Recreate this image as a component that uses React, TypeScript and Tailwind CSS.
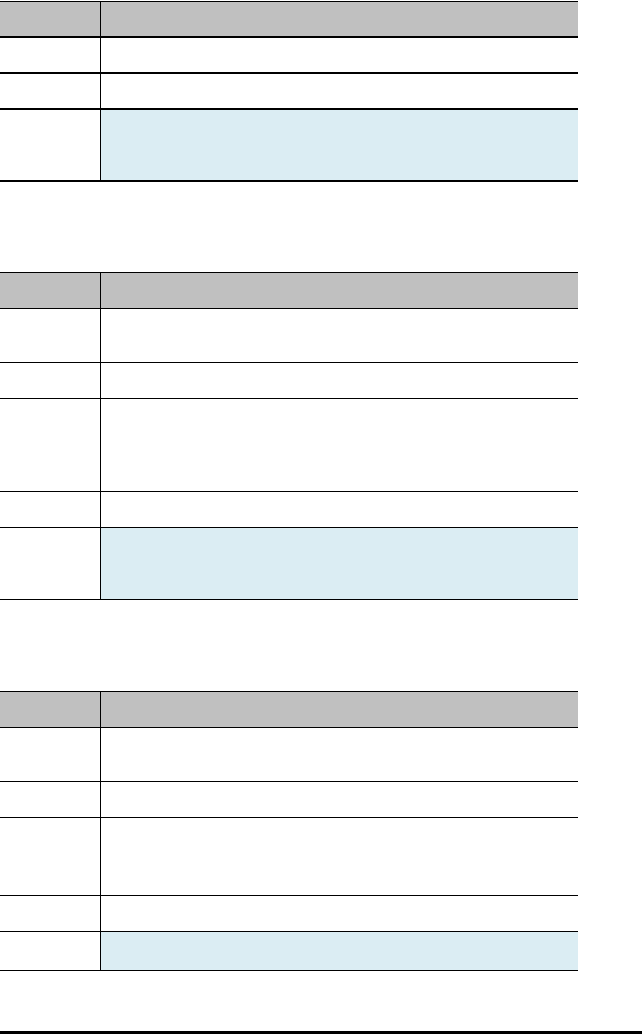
type Row = { h: string; blue?: boolean };

// row heights include the bottom rule
const tableOne: Row[] = [
  { h: "h-[36px]" },
  { h: "h-[36px]" },
  { h: "h-[72px]", blue: true },
];

const tableTwo: Row[] = [
  { h: "h-[54px]" },
  { h: "h-[36px]" },
  { h: "h-[93px]" },
  { h: "h-[36px]" },
  { h: "h-[72px]", blue: true },
];

const tableThree: Row[] = [
  { h: "h-[54px]" },
  { h: "h-[36px]" },
  { h: "h-[78px]" },
  { h: "h-[36px]" },
  { h: "h-[39px]", blue: true },
];

function Table({
  rows,
  headerH,
  line,
}: {
  rows: Row[];
  headerH: string;
  line: string;
}) {
  return (
    <div className="w-[578px] border-t border-black">
      {/* Header */}
      <div className={`flex bg-[#c0c0c0] ${headerH} ${line}`}>
        <div className="w-[101px] border-r border-black" />
        <div className="flex-1" />
      </div>

      {/* Body */}
      {rows.map((row, i) => (
        <div key={i} className={`flex ${row.h} ${line}`}>
          <div className="w-[101px] border-r border-black bg-white" />
          <div className={row.blue ? "flex-1 bg-[#dbedf3]" : "flex-1 bg-white"} />
        </div>
      ))}
    </div>
  );
}

export default function App() {
  return (
    <div className="w-[642px] h-[1034px] bg-white flex flex-col">
      <div className="pt-[1px]">
        <Table rows={tableOne} headerH="h-[36px]" line="border-b-2 border-black" />
      </div>

      <div className="mt-[90px]">
        <Table rows={tableTwo} headerH="h-[36px]" line="border-b border-black" />
      </div>

      <div className="mt-[91px]">
        <Table rows={tableThree} headerH="h-[36px]" line="border-b border-black" />
      </div>

      {/* Footer rule */}
      <div className="mt-auto h-[3px] bg-black" />
    </div>
  );
}
